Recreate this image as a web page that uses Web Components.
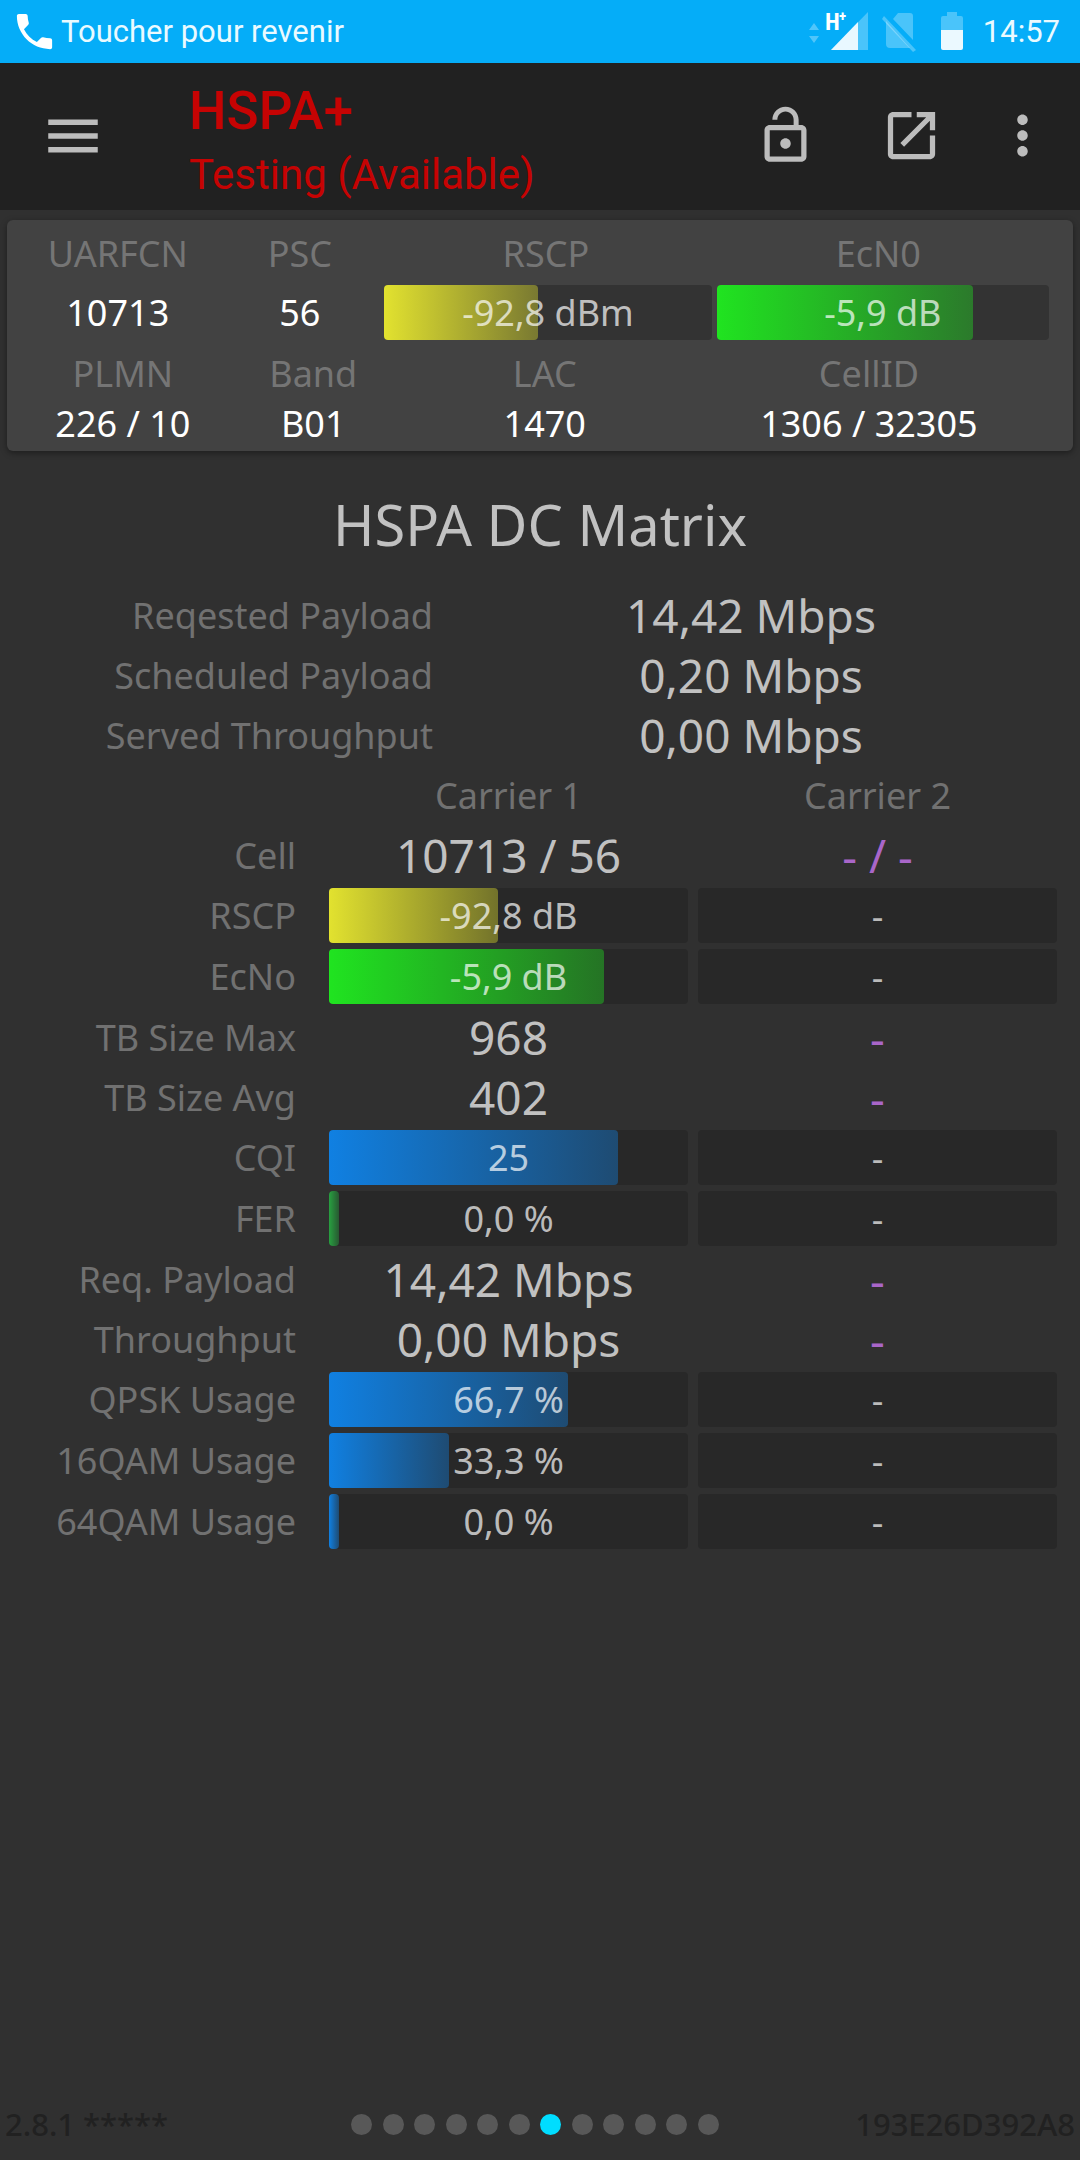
<!DOCTYPE html>
<html lang="fr">
<head>
<meta charset="utf-8">
<meta name="viewport" content="width=device-width, initial-scale=1">
<title>HSPA+</title>
<style>
  body {
    margin: 0;
    background: #303030;
    color: #c1c1c1;
    font-family: "Noto Sans", "Open Sans", sans-serif;
  }
</style>
</head>
<body>
<phone-screen>
  <status-bar slot="status" time="14:57">Toucher pour revenir</status-bar>
  <app-bar slot="bar">
    <span slot="title">HSPA+</span>
    <span slot="subtitle">Testing (Available)</span>
  </app-bar>
  <cell-card></cell-card>
  <dc-matrix>HSPA DC Matrix</dc-matrix>
  <page-footer slot="footer" pages="12" current="7">
    <span slot="version">2.8.1 *****</span>
    <span slot="serial">193E26D392A8</span>
  </page-footer>
</phone-screen>

<script>
  // Base class: clones the markup returned by render() into an open shadow root.
  class Base extends HTMLElement {
    connectedCallback() {
      if (this.shadowRoot) return;
      const template = document.createElement('template');
      template.innerHTML = this.render();
      this.attachShadow({ mode: 'open' }).append(template.content.cloneNode(true));
    }
  }

  customElements.define('phone-screen', class extends Base {
    render() {
      return `
        <style>
          :host { display: flex; flex-direction: column; min-height: 100vh; }
          main { flex: 1; }
        </style>
        <slot name="status"></slot>
        <slot name="bar"></slot>
        <main><slot></slot></main>
        <slot name="footer"></slot>`;
    }
  });

  customElements.define('status-bar', class extends Base {
    render() {
      return `
        <style>
          :host { display: flex; align-items: center; height: 63px; padding: 0 20px 0 11px;
                  background: #05adf8; color: #eafaff; font: 31px/64px Roboto, sans-serif; }
          .call { width: 47px; height: 47px; margin-right: 3px; fill: #fff; }
          .icons { display: flex; align-items: center; margin-left: auto; }
          .icons svg { height: 63px; fill: #fff; display: block; }
          text { font: bold 24px "Roboto Condensed", "Liberation Sans Narrow", Roboto, sans-serif; }
          .plus { font-size: 15px; }
          time { margin-left: 12px; }
        </style>
        <svg class="call" viewBox="0 0 24 24" aria-hidden="true"><path d="M6.62 10.79c1.44 2.83 3.76 5.14 6.59 6.59l2.2-2.2c.27-.27.67-.36 1.02-.24 1.12.37 2.33.57 3.57.57.55 0 1 .45 1 1V20c0 .55-.45 1-1 1C10.61 21 3 13.39 3 4c0-.55.45-1 1-1h3.5c.55 0 1 .45 1 1 0 1.25.2 2.45.57 3.57.11.35.03.74-.25 1.02z"/></svg>
        <span><slot></slot></span>
        <span class="icons">
          <svg width="166" viewBox="805 0 166 63" aria-hidden="true">
            <path opacity=".3" d="M809 30l5-7 5 7zM809 36h10l-5 7z"/>
            <path opacity=".28" d="M868 12v38h-37z"/>
            <path opacity=".88" d="M858 22v28h-27z"/>
            <text x="825" y="30">H</text>
            <text class="plus" x="839" y="21">+</text>
            <path opacity=".28" d="M898 13h12q3 0 3 3v24L893 19zM886 21l24 27h-20q-4 0-4-4z"/>
            <path opacity=".28" d="M884 16l32 34-3 2-31-33z"/>
            <path opacity=".28" d="M941 18q0-2 2-2h4v-4h10v4h4q2 0 2 2v12h-22z"/>
            <path opacity=".92" d="M941 30h22v18q0 2-2 2h-18q-2 0-2-2z"/>
          </svg>
          <time>${this.getAttribute('time')}</time>
        </span>`;
    }
  });

  customElements.define('icon-button', class extends Base {
    render() {
      return `
        <style>
          :host { display: block; width: 126px; }
          button { display: flex; align-items: center; justify-content: center; width: 100%;
                   height: 145px; padding: 0; border: 0; background: none; }
          svg { width: var(--size, 63px); height: var(--size, 63px); fill: #bcbcbc; }
        </style>
        <button type="button" aria-label="${this.getAttribute('label')}">
          <svg viewBox="0 0 24 24" aria-hidden="true"><path d="${this.getAttribute('d')}"/></svg>
        </button>`;
    }
  });

  customElements.define('app-bar', class extends Base {
    render() {
      return `
        <style>
          :host { display: flex; height: 147px; padding-right: 10px; background: #212121;
                  color: #c60303; font-family: Roboto, sans-serif; }
          .menu { width: 146px; --size: 66px; }
          .more { width: 96px; }
          .titles { flex: 1; padding: 16px 0 0 43px; line-height: 64px; }
          h1 { margin: 0; font-size: 53px; font-weight: 500; line-height: 64px; }
          p { margin: 0; font-size: 42px; }
        </style>
        <icon-button class="menu" label="Menu" d="M3 18h18v-2H3v2zm0-5h18v-2H3v2zm0-7v2h18V6H3z"></icon-button>
        <div class="titles">
          <h1><slot name="title"></slot></h1>
          <p><slot name="subtitle"></slot></p>
        </div>
        <icon-button label="Lock" d="M12 17c1.1 0 2-.9 2-2s-.9-2-2-2-2 .9-2 2 .9 2 2 2zm6-9h-1V6c0-2.76-2.24-5-5-5S7 3.24 7 6h1.9c0-1.71 1.39-3.1 3.1-3.1 1.71 0 3.1 1.39 3.1 3.1v2H6c-1.1 0-2 .9-2 2v10c0 1.1.9 2 2 2h12c1.1 0 2-.9 2-2V10c0-1.1-.9-2-2-2zm0 12H6V10h12v10z"></icon-button>
        <icon-button label="Open" d="M19 19H5V5h7V3H5c-1.11 0-2 .9-2 2v14c0 1.1.89 2 2 2h14c1.1 0 2-.9 2-2v-7h-2v7zM14 3v2h3.59l-9.83 9.83 1.41 1.41L19 6.41V10h2V3h-7z"></icon-button>
        <icon-button class="more" label="More" d="M12 8c1.1 0 2-.9 2-2s-.9-2-2-2-2 .9-2 2 .9 2 2 2zm0 2c-1.1 0-2 .9-2 2s.9 2 2 2 2-.9 2-2-.9-2-2-2zm0 6c-1.1 0-2 .9-2 2s.9 2 2 2 2-.9 2-2-.9-2-2-2z"></icon-button>`;
    }
  });

  // Horizontal gauge; the fill fades to 40% opacity and its width is the level attribute.
  const COLORS = { yellow: '226 226 47', green: '32 228 32', blue: '16 128 226', fer: '40 160 64' };
  customElements.define('gauge-bar', class extends Base {
    render() {
      const level = this.getAttribute('level');
      const rgb = COLORS[this.getAttribute('tone')];
      const fill = level === null ? '' :
        `<span class="fill" style="width:${level}%;background:linear-gradient(90deg,rgb(${rgb}),rgb(${rgb} / .4))"></span>`;
      return `
        <style>
          :host { display: grid; height: 55px; border-radius: 4px; background: var(--track, #282828);
                  color: rgb(255 255 255 / .7); font-size: 36px; line-height: 56px; text-align: center; }
          .fill, .text { grid-area: 1 / 1; }
          .fill { height: 55px; min-width: 10px; border-radius: 4px; }
        </style>
        ${fill}<span class="text"><slot></slot></span>`;
    }
  });

  customElements.define('cell-card', class extends Base {
    render() {
      return `
        <style>
          :host { display: block; margin: 10px 7px 33px; padding: 5px 24px 6px 13px; border-radius: 6px;
                  background: #424242; box-shadow: 0 2px 6px rgb(0 0 0 / .4); --track: #333; }
          table { width: 100%; table-layout: fixed; border-collapse: collapse; font-size: 36px; }
          th { height: 57px; padding: 0; color: #757575; font-weight: 400; }
          td { height: 61px; padding: 0; color: #fff; text-align: center; }
          td gauge-bar { margin-right: 5px; }
          td:last-child gauge-bar { margin-right: 0; }
          .radio th:nth-child(n+3) { padding-right: 9px; }
          .ids th { height: 60px; }
          .ids td { height: 42px; line-height: 42px; }
        </style>
        <table class="radio">
          <colgroup><col style="width:19%"><col style="width:16.4%"><col style="width:32.3%"><col></colgroup>
          <tr><th>UARFCN</th><th>PSC</th><th>RSCP</th><th>EcN0</th></tr>
          <tr><td>10713</td><td>56</td>
            <td><gauge-bar tone="yellow" level="47">-92,8 dBm</gauge-bar></td>
            <td><gauge-bar tone="green" level="77">-5,9 dB</gauge-bar></td></tr>
        </table>
        <table class="ids">
          <colgroup><col style="width:20%"><col style="width:17%"><col style="width:28%"><col></colgroup>
          <tr><th>PLMN</th><th>Band</th><th>LAC</th><th>CellID</th></tr>
          <tr><td>226 / 10</td><td>B01</td><td>1470</td><td>1306 / 32305</td></tr>
        </table>`;
    }
  });

  const SUMMARY = [
    ['Reqested Payload', '14,42 Mbps'],
    ['Scheduled Payload', '0,20 Mbps'],
    ['Served Throughput', '0,00 Mbps'],
  ];
  // [label, carrier 1, carrier 2, gauge tone, gauge level]
  const CARRIERS = [
    ['Cell', '10713 / 56', '- / -'],
    ['RSCP', '-92,8 dB', '-', 'yellow', 47],
    ['EcNo', '-5,9 dB', '-', 'green', 76.5],
    ['TB Size Max', '968', '-'],
    ['TB Size Avg', '402', '-'],
    ['CQI', '25', '-', 'blue', 80.5],
    ['FER', '0,0 %', '-', 'fer', 0],
    ['Req. Payload', '14,42 Mbps', '-'],
    ['Throughput', '0,00 Mbps', '-'],
    ['QPSK Usage', '66,7 %', '-', 'blue', 66.7],
    ['16QAM Usage', '33,3 %', '-', 'blue', 33.3],
    ['64QAM Usage', '0,0 %', '-', 'blue', 0],
  ];
  customElements.define('dc-matrix', class extends Base {
    render() {
      const summary = SUMMARY.map(([label, value]) =>
        `<tr><th scope="row">${label}</th><td>${value}</td></tr>`).join('');
      const rows = CARRIERS.map(([label, one, two, tone, level]) => tone
        ? `<tr class="gauge"><th scope="row">${label}</th><td><gauge-bar tone="${tone}" level="${level}">${one}</gauge-bar></td><td><gauge-bar>${two}</gauge-bar></td></tr>`
        : `<tr><th scope="row">${label}</th><td>${one}</td><td class="idle">${two}</td></tr>`).join('');
      return `
        <style>
          :host { display: block; }
          h2 { margin: 0 0 21px; font-size: 56px; font-weight: 400; line-height: 80px; text-align: center; }
          .tables { padding-right: 18px; }
          table { width: 100%; table-layout: fixed; border-collapse: collapse; }
          th { height: 60px; padding: 0 5px; color: #717171; font-size: 36px; font-weight: 400; }
          th[scope=row] { text-align: right; padding: 0 28px 0 0; }
          td { padding: 0 5px; font-size: 46px; line-height: 60px; text-align: center; }
          .label { width: 324px; }
          .summary .label { width: 440px; }
          .summary th[scope=row] { padding-right: 7px; }
          .gauge th { height: 61px; }
          .idle { color: #a966c9; }
        </style>
        <h2><slot></slot></h2>
        <div class="tables">
          <table class="summary"><colgroup><col class="label"><col></colgroup>${summary}</table>
          <table><colgroup><col class="label"><col><col></colgroup>
            <tr><td></td><th scope="col">Carrier 1</th><th scope="col">Carrier 2</th></tr>
            ${rows}
          </table>
        </div>`;
    }
  });

  customElements.define('page-footer', class extends Base {
    render() {
      const current = Number(this.getAttribute('current'));
      const dots = Array.from({ length: Number(this.getAttribute('pages')) }, (_, i) =>
        `<i${i + 1 === current ? ' class="on"' : ''}></i>`).join('');
      return `
        <style>
          :host { display: grid; grid-template-columns: 1fr 378px 1fr; align-items: center; height: 72px;
                  padding: 0 5px; color: #212121; font-size: 31px; font-weight: 500; }
          .dots { display: grid; grid-template-columns: repeat(12, 1fr); }
          i { width: 21px; height: 21px; border-radius: 50%; background: #585858; }
          .on { background: #00ddff; }
          .serial { text-align: right; }
        </style>
        <span><slot name="version"></slot></span>
        <div class="dots">${dots}</div>
        <span class="serial"><slot name="serial"></slot></span>`;
    }
  });
</script>
</body>
</html>
